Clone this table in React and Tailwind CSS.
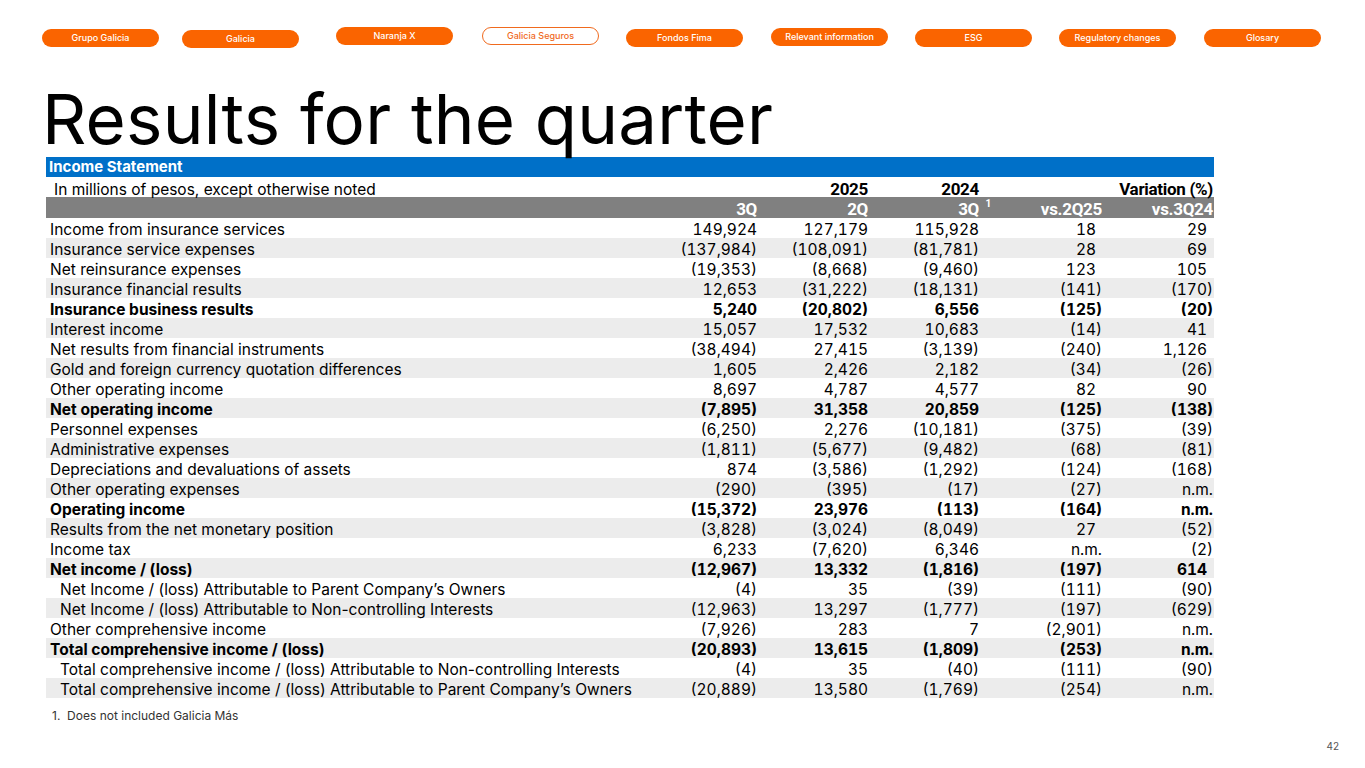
import React from "react";

const pills = [
  { t: "Grupo Galicia", c: "ml-[42px] mt-[29px]" },
  { t: "Galicia", c: "ml-[23px] mt-[30px]" },
  { t: "Naranja X", c: "ml-[37px] mt-[27px]" },
  { t: "Galicia Seguros", c: "ml-[29px] mt-[27px]", outline: true },
  { t: "Fondos Fima", c: "ml-[27px] mt-[29px]" },
  { t: "Relevant information", c: "ml-[28px] mt-[28px]" },
  { t: "ESG", c: "ml-[27px] mt-[29px]" },
  { t: "Regulatory changes", c: "ml-[27px] mt-[29px]" },
  { t: "Glosary", c: "ml-[28px] mt-[29px]" },
];

const rows = [
  ["Income from insurance services", "149,924", "127,179", "115,928", "18", "29"],
  ["Insurance service expenses", "(137,984)", "(108,091)", "(81,781)", "28", "69"],
  ["Net reinsurance expenses", "(19,353)", "(8,668)", "(9,460)", "123", "105"],
  ["Insurance financial results", "12,653", "(31,222)", "(18,131)", "(141)", "(170)"],
  ["B", "Insurance business results", "5,240", "(20,802)", "6,556", "(125)", "(20)"],
  ["Interest income", "15,057", "17,532", "10,683", "(14)", "41"],
  ["Net results from financial instruments", "(38,494)", "27,415", "(3,139)", "(240)", "1,126"],
  ["Gold and foreign currency quotation differences", "1,605", "2,426", "2,182", "(34)", "(26)"],
  ["Other operating income", "8,697", "4,787", "4,577", "82", "90"],
  ["B", "Net operating income", "(7,895)", "31,358", "20,859", "(125)", "(138)"],
  ["Personnel expenses", "(6,250)", "2,276", "(10,181)", "(375)", "(39)"],
  ["Administrative expenses", "(1,811)", "(5,677)", "(9,482)", "(68)", "(81)"],
  ["Depreciations and devaluations of assets", "874", "(3,586)", "(1,292)", "(124)", "(168)"],
  ["Other operating expenses", "(290)", "(395)", "(17)", "(27)", "n.m."],
  ["B", "Operating income", "(15,372)", "23,976", "(113)", "(164)", "n.m."],
  ["Results from the net monetary position", "(3,828)", "(3,024)", "(8,049)", "27", "(52)"],
  ["Income tax", "6,233", "(7,620)", "6,346", "n.m.", "(2)"],
  ["B", "Net income / (loss)", "(12,967)", "13,332", "(1,816)", "(197)", "614"],
  ["I", "Net Income / (loss) Attributable to Parent Company\u2019s Owners", "(4)", "35", "(39)", "(111)", "(90)"],
  ["I", "Net Income / (loss) Attributable to Non-controlling Interests", "(12,963)", "13,297", "(1,777)", "(197)", "(629)"],
  ["Other comprehensive income", "(7,926)", "283", "7", "(2,901)", "n.m."],
  ["B", "Total comprehensive income / (loss)", "(20,893)", "13,615", "(1,809)", "(253)", "n.m."],
  ["I", "Total comprehensive income / (loss) Attributable to Non-controlling Interests", "(4)", "35", "(40)", "(111)", "(90)"],
  ["I", "Total comprehensive income / (loss) Attributable to Parent Company\u2019s Owners", "(20,889)", "13,580", "(1,769)", "(254)", "n.m."],
];

const grid = "grid grid-cols-[601px_110px_111px_111px_123px_112px]";
const narrow = { fontFamily: "Roboto,'Liberation Sans',sans-serif" };

export default function App() {
  return (
    <div
      className="w-[1365px] h-[768px] bg-white relative overflow-hidden text-black"
      style={{ fontFamily: "Inter, 'Noto Sans', sans-serif" }}
    >
      <div className="flex items-start">
        {pills.map((p) => (
          <div
            key={p.t}
            className={
              p.outline
                ? `${p.c} w-[117px] h-[18px] rounded-full border border-[#f06a1e] bg-white text-[#f06a1e] text-[9px] font-medium flex items-center justify-center`
                : `${p.c} w-[117px] h-[18px] rounded-full bg-[#fa6400] text-white text-[9px] font-medium flex items-center justify-center`
            }
          >
            {p.t}
          </div>
        ))}
      </div>

      <h1 className="ml-[42px] mt-[35px] text-[69px] leading-[72px] font-normal tracking-[0.2px] text-black">
        Results for the quarter
      </h1>

      <div className="ml-[46px] mt-[2px] w-[1168px] text-[15.5px]">
        <div className="h-[20px] bg-[#0070c8] text-white font-bold flex items-center pl-[3px] text-[15px]">
          Income Statement
        </div>
        <div className={`${grid} h-[20px] items-center`}>
          <div className="pl-[8px]">In millions of pesos, except otherwise noted</div>
          <div></div>
          <div className="text-right font-bold text-[17px] tracking-[-0.3px]" style={narrow}>2025</div>
          <div className="text-right font-bold text-[17px] tracking-[-0.3px]" style={narrow}>2024</div>
          <div></div>
          <div className="text-right font-bold text-[17px] tracking-[-0.3px] pr-[1px]" style={narrow}>Variation (%)</div>
        </div>
        <div className={`${grid} h-[21px] items-center bg-[#808080] text-white font-bold text-[17px] tracking-[-0.3px]`} style={narrow}>
          <div></div>
          <div className="text-right">3Q</div>
          <div className="text-right">2Q</div>
          <div className="text-right relative">
            3Q
            <span className="absolute right-[-12px] top-[-1px] text-[10px]">1</span>
          </div>
          <div className="text-right">vs.2Q25</div>
          <div className="text-right pr-[1px]">vs.3Q24</div>
        </div>
        {rows.map((r, i) => {
          const bold = r[0] === "B";
          const indent = r[0] === "I";
          const vals = bold || indent ? r.slice(1) : r;
          return (
            <div
              key={i}
              className={`${grid} h-[20px] items-center ${i % 2 === 1 ? "bg-[#ececec]" : "bg-white"} ${bold ? "font-bold" : "font-normal"}`}
            >
              <div className={indent ? "pl-[14px] whitespace-nowrap" : "pl-[4px] whitespace-nowrap"}>{vals[0]}</div>
              {vals.slice(1).map((v, j) => {
                const pad = j >= 3 && !v.startsWith("(") && v !== "n.m.";
                return (
                  <div
                    key={j}
                    className={`text-right tabular-nums ${j === 4 ? (pad ? "pr-[7px]" : "pr-[1px]") : pad ? "pr-[6px]" : ""}`}
                  >
                    {v}
                  </div>
                );
              })}
            </div>
          );
        })}
        <div className="mt-[9px] pl-[6px] text-[12px] text-[#333]">1.&nbsp; Does not included Galicia Más</div>
      </div>

      <div className="absolute right-[26px] top-[739px] text-[10px] text-[#555]">42</div>
    </div>
  );
}
